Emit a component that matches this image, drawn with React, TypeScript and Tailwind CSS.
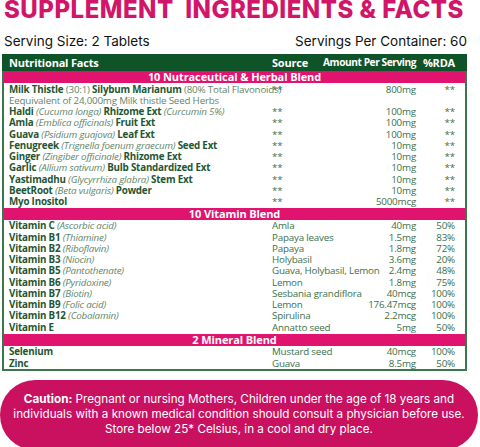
import React from "react";

type Row = { name: React.ReactNode; src: string; amt: string; rda: string };

const I = ({ children }: { children: React.ReactNode }) => (
  <span className="italic font-normal text-[#62866b]">{children}</span>
);

const herbal: Row[] = [
  {
    name: (
      <>
        Milk Thistle <span className="font-normal text-[#62866b]">(30:1)</span> Silybum Marianum{" "}
        <span className="font-normal text-[#62866b]">(80% Total Flavonoids)</span>
      </>
    ),
    src: "**",
    amt: "800mg",
    rda: "**",
  },
  {
    name: <span className="font-normal text-[#62866b]">Eequivalent of 24,000mg Milk thistle Seed Herbs</span>,
    src: "",
    amt: "",
    rda: "",
  },
  { name: <>Haldi <I>(Cucuma longa)</I> Rhizome Ext <I>(Curcumin 5%)</I></>, src: "**", amt: "100mg", rda: "**" },
  { name: <>Amla <I>(Emblica officinals)</I> Fruit Ext</>, src: "**", amt: "100mg", rda: "**" },
  { name: <>Guava <I>(Psidium guajova)</I> Leaf Ext</>, src: "**", amt: "100mg", rda: "**" },
  { name: <>Fenugreek <I>(Trignella foenum graecum)</I> Seed Ext</>, src: "**", amt: "10mg", rda: "**" },
  { name: <>Ginger <I>(Zingiber officinale)</I> Rhizome Ext</>, src: "**", amt: "10mg", rda: "**" },
  { name: <>Garlic <I>(Allium sativum)</I> Bulb Standardized Ext</>, src: "**", amt: "10mg", rda: "**" },
  { name: <>Yastimadhu <I>(Glycyrrhiza glabra)</I> Stem Ext</>, src: "**", amt: "10mg", rda: "**" },
  { name: <>BeetRoot <I>(Beta vulgaris)</I> Powder</>, src: "**", amt: "10mg", rda: "**" },
  { name: <>Myo Inositol</>, src: "**", amt: "5000mcg", rda: "**" },
];

const vitamins: Row[] = [
  { name: <>Vitamin C <I>(Ascorbic acid)</I></>, src: "Amla", amt: "40mg", rda: "50%" },
  { name: <>Vitamin B1 <I>(Thiamine)</I></>, src: "Papaya leaves", amt: "1.5mg", rda: "83%" },
  { name: <>Vitamin B2 <I>(Riboflavin)</I></>, src: "Papaya", amt: "1.8mg", rda: "72%" },
  { name: <>Vitamin B3 <I>(Niocin)</I></>, src: "Holybasil", amt: "3.6mg", rda: "20%" },
  { name: <>Vitamin B5 <I>(Pantothenate)</I></>, src: "Guava, Holybasil, Lemon", amt: "2.4mg", rda: "48%" },
  { name: <>Vitamin B6 <I>(Pyridoxine)</I></>, src: "Lemon", amt: "1.8mg", rda: "75%" },
  { name: <>Vitamin B7 <I>(Biotin)</I></>, src: "Sesbania grandiflora", amt: "40mcg", rda: "100%" },
  { name: <>Vitamin B9 <I>(Folic acid)</I></>, src: "Lemon", amt: "176.47mcg", rda: "100%" },
  { name: <>Vitamin B12 <I>(Cobalamin)</I></>, src: "Spirulina", amt: "2.2mcg", rda: "100%" },
  { name: <>Vitamin E</>, src: "Annatto seed", amt: "5mg", rda: "50%" },
];

const minerals: Row[] = [
  { name: <>Selenium</>, src: "Mustard seed", amt: "40mcg", rda: "100%" },
  { name: <>Zinc</>, src: "Guava", amt: "8.5mg", rda: "50%" },
];

const grid = "grid grid-cols-[268px_92px_52px_39px]";

function DataRow({ r }: { r: Row }) {
  return (
    <div className={`${grid} h-[11.25px] leading-[11.25px] text-[9.8px] tracking-[-0.2px] whitespace-nowrap`}>
      <div className="pl-[5px] font-bold text-[#1f5632]">{r.name}</div>
      <div className="text-[#3d7049]">{r.src}</div>
      <div className="text-right text-[#3d7049]">{r.amt}</div>
      <div className="text-right text-[#3d7049]">{r.rda}</div>
    </div>
  );
}

function Band({ children }: { children: React.ReactNode }) {
  return (
    <div className="h-[12px] bg-[#e0146f] text-white font-bold text-[11px] leading-[12px] text-center tracking-[-0.1px]">
      {children}
    </div>
  );
}

export default function App() {
  return (
    <div className="w-[480px] h-[447px] bg-white overflow-hidden relative" style={{ fontFamily: "'Open Sans', sans-serif" }}>
      <h1
        className="pl-[4px] text-[24px] leading-[24px] -mt-[2px] font-extrabold text-[#d1166a] tracking-[0.5px] whitespace-nowrap h-[24px]"
        style={{ fontFamily: "Inter, sans-serif" }}
      >
        SUPPLEMENT&nbsp; INGREDIENTS &amp; FACTS
      </h1>
      <div
        className="flex justify-between pl-[4px] pr-[13px] mt-[11px] h-[21px] text-[13.5px] leading-[16px] text-[#111]"
        style={{ fontFamily: "Inter, sans-serif" }}
      >
        <span>Serving Size: 2 Tablets</span>
        <span>Servings Per Container: 60</span>
      </div>
      <div className="ml-[2px] w-[465px] border-2 border-[#3b774a] border-t-0">
        <div className={`${grid} h-[17px] bg-[#0f5329] text-white font-bold text-[11px] leading-[17px] tracking-[-0.2px] -mx-[2px] px-[2px]`}>
          <div className="pl-[5px]">Nutritional Facts</div>
          <div>Source</div>
          <div className="text-right whitespace-nowrap -ml-[60px] text-[10.2px] tracking-[-0.45px]">Amount Per Serving</div>
          <div className="text-right">%RDA</div>
        </div>
        <Band>10 Nutraceutical &amp; Herbal Blend</Band>
        <div className="pt-[0.5px]">
          {herbal.map((r, i) => (
            <DataRow key={i} r={r} />
          ))}
        </div>
        <div className="h-[1px]" />
        <Band>10 Vitamin Blend</Band>
        {vitamins.map((r, i) => (
          <DataRow key={i} r={r} />
        ))}
        <div className="h-[1.5px]" />
        <Band>2 Mineral Blend</Band>
        {minerals.map((r, i) => (
          <DataRow key={i} r={r} />
        ))}
      </div>
      <div
        className="absolute left-0 top-[380px] w-[478px] h-[70px] rounded-[35px] bg-[#c9115f] text-white text-center text-[11.7px] leading-[15px] pt-[12px] px-[2px] whitespace-nowrap"
        style={{ fontFamily: "Inter, sans-serif" }}
      >
        <span className="font-bold">Caution:</span> Pregnant or nursing Mothers, Children under the age of 18 years and
        <br />
        individuals with a known medical condition should consult a physician before use.
        <br />
        Store below 25* Celsius, in a cool and dry place.
      </div>
    </div>
  );
}
